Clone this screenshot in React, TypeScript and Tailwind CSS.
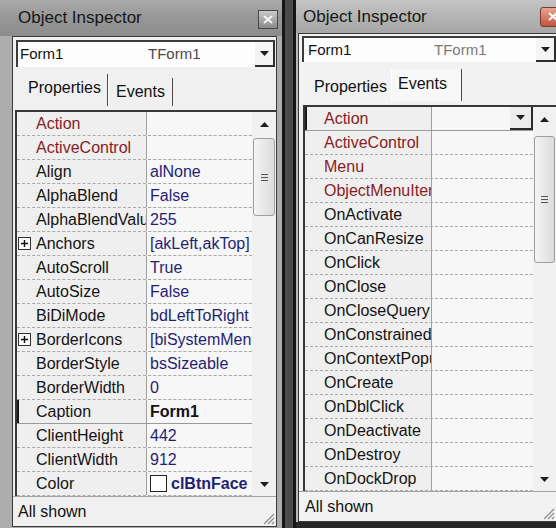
import React from "react";

type Row = {
  name: string;
  value?: string;
  red?: boolean;
  plus?: boolean;
  selected?: boolean;
  bold?: boolean;
  swatch?: boolean;
  dropdown?: boolean;
};

const leftRows: Row[] = [
  { name: "Action", red: true },
  { name: "ActiveControl", red: true },
  { name: "Align", value: "alNone" },
  { name: "AlphaBlend", value: "False" },
  { name: "AlphaBlendValue", value: "255" },
  { name: "Anchors", value: "[akLeft,akTop]", plus: true },
  { name: "AutoScroll", value: "True" },
  { name: "AutoSize", value: "False" },
  { name: "BiDiMode", value: "bdLeftToRight" },
  { name: "BorderIcons", value: "[biSystemMenu,biMinimize]", plus: true },
  { name: "BorderStyle", value: "bsSizeable" },
  { name: "BorderWidth", value: "0" },
  { name: "Caption", value: "Form1", selected: true, bold: true },
  { name: "ClientHeight", value: "442" },
  { name: "ClientWidth", value: "912" },
  { name: "Color", value: "clBtnFace", swatch: true, bold: true },
];

const rightRows: Row[] = [
  { name: "Action", red: true, selected: true, dropdown: true },
  { name: "ActiveControl", red: true },
  { name: "Menu", red: true },
  { name: "ObjectMenuItem", red: true },
  { name: "OnActivate" },
  { name: "OnCanResize" },
  { name: "OnClick" },
  { name: "OnClose" },
  { name: "OnCloseQuery" },
  { name: "OnConstrainedResize" },
  { name: "OnContextPopup" },
  { name: "OnCreate" },
  { name: "OnDblClick" },
  { name: "OnDeactivate" },
  { name: "OnDestroy" },
  { name: "OnDockDrop" },
];

function Tri({ up }: { up?: boolean }) {
  return (
    <svg width="9" height="5" viewBox="0 0 9 5" className="block">
      <path d={up ? "M0 5 L4.5 0 L9 5 Z" : "M0 0 L9 0 L4.5 5 Z"} fill="#1e1e1e" />
    </svg>
  );
}

function PlusBox() {
  return (
    <svg width="13" height="13" viewBox="0 0 13 13" className="block">
      <rect x="0.5" y="0.5" width="12" height="12" fill="#fafafa" stroke="#333" />
      <path d="M3 6.5h7M6.5 3v7" stroke="#111" strokeWidth="1.4" />
    </svg>
  );
}

function Grip() {
  return (
    <svg width="13" height="13" viewBox="0 0 13 13" className="block">
      <path d="M12 2L2 12M12 6L6 12M12 10L10 12" stroke="#8c8c8c" strokeWidth="1.2" />
    </svg>
  );
}

function Combo({ nameW, pad, typeColor }: { nameW: string; pad: string; typeColor: string }) {
  return (
    <div className="flex h-full border-t-2 border-l-2 border-[#3c3c3c] bg-[#fdfdfd] text-[15px]">
      <span className={`${nameW} ${pad} shrink-0 leading-[24px]`}>Form1</span>
      <span className={`${pad} ${typeColor} flex-1 leading-[24px]`}>TForm1</span>
      <div className="flex w-[20px] shrink-0 items-center justify-center border-r-2 border-b-2 border-[#2e2e2e] bg-[#f4f4f4]">
        <Tri />
      </div>
    </div>
  );
}

function GridRow({ row, nameW }: { row: Row; nameW: string }) {
  return (
    <div
      className={`flex h-[24px] shrink-0 ${
        row.selected
          ? "border-b border-[#9a9a9a] shadow-[inset_0_1px_0_#1a1a1a]"
          : "border-b border-dashed border-[#a9a9a9]"
      }`}
    >
      <div
        className={`${nameW} flex shrink-0 items-center overflow-hidden whitespace-nowrap border-r border-[#a0a0a0] bg-[#efefef] ${
          row.selected ? "shadow-[inset_2px_0_0_#1a1a1a]" : ""
        } ${row.red ? "text-[#8a1c24]" : "text-[#141414]"}`}
      >
        <div className="flex w-[19px] shrink-0 items-center pl-[1px]">{row.plus && <PlusBox />}</div>
        <span>{row.name}</span>
      </div>
      <div
        className={`flex min-w-0 flex-1 items-center overflow-hidden whitespace-nowrap bg-[#f7f7f7] pl-[3px] ${
          row.bold ? "font-bold" : ""
        } ${row.selected && row.bold ? "text-[#111]" : "text-[#1f1f78]"}`}
      >
        {row.swatch && (
          <span className="mr-[4px] h-[17px] w-[17px] shrink-0 border border-[#222] bg-white" />
        )}
        {row.value && <span>{row.value}</span>}
        {row.dropdown && (
          <div className="ml-auto flex h-full w-[23px] shrink-0 items-center justify-center border-r-2 border-b-2 border-[#2a2a2a] bg-[#ededed]">
            <Tri />
          </div>
        )}
      </div>
    </div>
  );
}

function Scrollbar({ w, thumb }: { w: string; thumb: string }) {
  return (
    <div className={`${w} flex shrink-0 flex-col bg-[#f1f1f1]`}>
      <div className="flex h-[24px] shrink-0 items-center justify-center">
        <Tri up />
      </div>
      <div
        className={`${thumb} mx-[1px] flex shrink-0 flex-col items-center justify-center gap-[2px] rounded-[3px] border border-[#9e9e9e] bg-gradient-to-r from-[#f4f4f4] to-[#dcdcdc]`}
      >
        <span className="h-[1px] w-[7px] bg-[#555]" />
        <span className="h-[1px] w-[7px] bg-[#555]" />
        <span className="h-[1px] w-[7px] bg-[#555]" />
      </div>
      <div className="flex-1" />
      <div className="flex h-[24px] shrink-0 items-center justify-center">
        <Tri />
      </div>
    </div>
  );
}

function Grid({
  rows,
  nameW,
  scrollW,
  thumb,
  className,
}: {
  rows: Row[];
  nameW: string;
  scrollW: string;
  thumb: string;
  className: string;
}) {
  return (
    <div className={`flex h-[386px] shrink-0 border-t-2 border-l-2 border-[#383838] ${className}`}>
      <div className="flex min-w-0 flex-1 flex-col overflow-hidden">
        {rows.map((r) => (
          <GridRow key={r.name} row={r} nameW={nameW} />
        ))}
      </div>
      <Scrollbar w={scrollW} thumb={thumb} />
    </div>
  );
}

function StatusBar({ pad }: { pad: string }) {
  return (
    <div className={`flex h-[30px] shrink-0 items-center border-t border-[#a3a3a3] ${pad}`}>
      <span>All shown</span>
      <div className="mr-[1px] mb-[1px] ml-auto self-end">
        <Grip />
      </div>
    </div>
  );
}

function LeftWindow() {
  return (
    <div className="flex w-[282px] shrink-0 flex-col bg-[#adadad] pb-[1px]">
      <div className="flex h-[36px] shrink-0 items-center bg-gradient-to-b from-[#a9a9a9] via-[#979797] to-[#8c8c8c] pr-[4px] pl-[18px]">
        <span className="text-[17px] text-[#161616]">Object Inspector</span>
        <div className="mt-[2px] ml-auto flex h-[19px] w-[20px] items-center justify-center border border-[#474747] bg-gradient-to-b from-[#cacaca] to-[#8a8a8a]">
          <svg width="10" height="9" viewBox="0 0 10 9" className="block">
            <path d="M1 1L9 8M9 1L1 8" stroke="#f4f4f4" strokeWidth="2.2" />
          </svg>
        </div>
      </div>
      <div className="ml-[12px] mr-[5px] flex flex-1 flex-col border border-[#3a3a3a] bg-[#f0f0f0]">
        <div className="mt-[3px] ml-[3px] mr-[1px] h-[27px] shrink-0">
          <Combo nameW="w-[128px]" pad="pl-[2px]" typeColor="text-[#4a4a4a]" />
        </div>
        <div className="flex h-[43px] shrink-0 items-end pb-[4px] pl-[5px]">
          <div className="h-[32px] w-[90px] border-r border-[#4a4a4a] pt-[2px] pl-[10px] leading-[24px]">
            Properties
          </div>
          <div className="h-[28px] w-[65px] border-r border-l border-r-[#4a4a4a] border-l-white pt-[2px] pl-[7px] leading-[24px]">
            Events
          </div>
        </div>
        <Grid rows={leftRows} nameW="w-[130px]" scrollW="w-[24px]" thumb="mt-[2px] h-[78px]" className="ml-[2px]" />
        <StatusBar pad="pl-[5px]" />
      </div>
    </div>
  );
}

function RightWindow() {
  return (
    <div className="flex w-[260px] shrink-0 flex-col overflow-hidden bg-[#b8b8b8]">
      <div className="flex h-[33px] shrink-0 items-center bg-gradient-to-b from-[#c4c4c4] via-[#b4b4b4] to-[#a6a6a6] pl-[7px]">
        <span className="text-[17px] text-[#161616]">Object Inspector</span>
        <div className="ml-auto -mr-[10px] flex h-[20px] w-[26px] shrink-0 items-center justify-center rounded-[3px] border border-[#7a3a2e] bg-gradient-to-b from-[#e8a594] to-[#c2533e]">
          <svg width="10" height="9" viewBox="0 0 10 9" className="block">
            <path d="M1 1L9 8M9 1L1 8" stroke="#ffffff" strokeWidth="2.2" />
          </svg>
        </div>
      </div>
      <div className="ml-[2px] flex flex-1 flex-col border-t border-b border-l border-[#3a3a3a] bg-[#f2f2f2]">
        <div className="mt-[2px] ml-[3px] h-[26px] shrink-0">
          <Combo nameW="w-[126px]" pad="pl-[4px]" typeColor="text-[#7a7a7a]" />
        </div>
        <div className="flex h-[43px] shrink-0 items-end pb-[4px] pl-[4px]">
          <div className="h-[28px] w-[88px] pt-[2px] pl-[11px] leading-[24px]">Properties</div>
          <div className="h-[32px] w-[71px] border-r border-l border-r-[#4a4a4a] border-l-white bg-[#f8f8f8] pt-[3px] pl-[6px] leading-[24px]">
            Events
          </div>
        </div>
        <Grid rows={rightRows} nameW="w-[127px]" scrollW="w-[23px]" thumb="mt-[5px] h-[127px]" className="ml-[4px]" />
        <StatusBar pad="pl-[6px]" />
      </div>
      <div className="h-[6px] shrink-0 bg-[#262626]" />
    </div>
  );
}

export default function App() {
  return (
    <div className="flex h-[528px] w-[556px] overflow-hidden bg-[#2e2e2e] font-['Liberation_Sans',Arial,sans-serif] text-[16px] text-[#111]">
      <LeftWindow />
      <div className="w-[14px] shrink-0 border-x-[3px] border-[#161616] bg-[#4b4b4b]" />
      <RightWindow />
    </div>
  );
}
